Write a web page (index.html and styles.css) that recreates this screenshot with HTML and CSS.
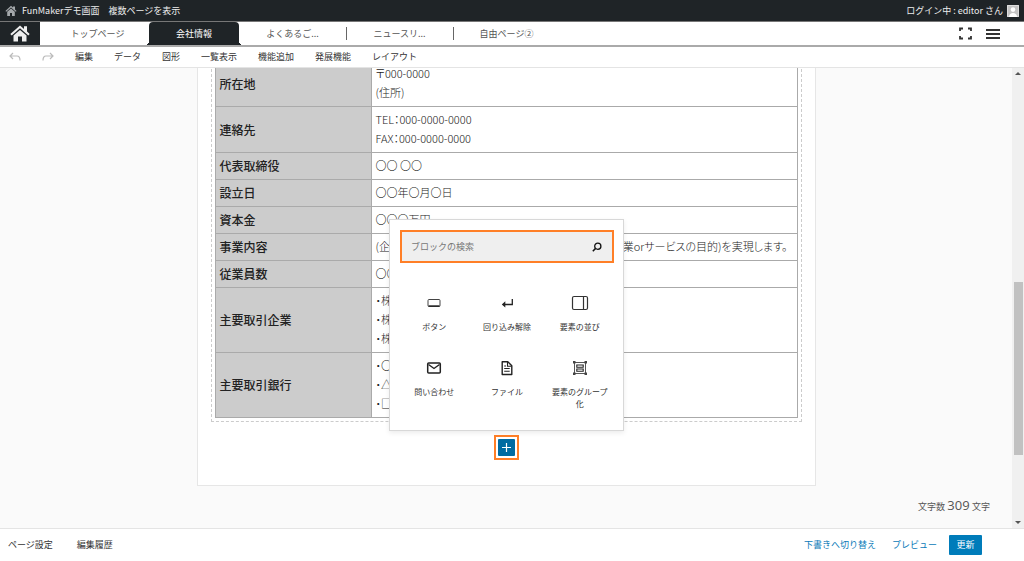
FILE: index.html
```html
<!DOCTYPE html>
<html lang="ja">
<head>
<meta charset="utf-8">
<meta name="viewport" content="width=device-width, initial-scale=1">
<title>FunMakerデモ画面</title>
<link rel="stylesheet" href="styles.css">
</head>
<body>
<header class="adminbar">
  <a class="site-link" href="#"><svg class="site-icon" viewBox="0 0 12 12"><path d="M6 .8 8 2.6V1.5h2v3L11.6 6l-.8.8L6 2.5 1.2 6.8.4 6zM2.2 6.8 6 3.5l3.8 3.3V11H7V8H5v3H2.2z" fill="#a4a8ab"/></svg>FunMakerデモ画面</a>
  <a href="#">複数ページを表示</a>
  <a class="account" href="#">ログイン中 : editor さん<svg class="avatar" viewBox="0 0 12 12"><path d="M0 0h12v12H0z" fill="#c4c4c4"/><path d="M.5.5h11v11H.5z" fill="none" stroke="#ddd"/><circle cx="6" cy="4.600" r="2.300" fill="#fff"/><path d="M2 12c0-3 2-4 4-4s4 1 4 4z" fill="#fff"/></svg></a>
</header>
<nav class="tabs" aria-label="ページ">
  <a class="home" href="#" aria-label="ホーム"><svg viewBox="0 0 20 17"><path d="M10 .5 14 4V1.300h3v5.300L19.700 9l-1.400 1.500L10 3.300l-8.300 7.200L.3 9zM3.500 10.500 10 5l6.500 5.500V16.500H12V11.500H8v5H3.500z" fill="#eee"/></svg></a>
  <a class="tab" href="#">トップページ</a>
  <a class="tab active" href="#" aria-current="page">会社情報</a>
  <a class="tab" href="#">よくあるご...</a>
  <a class="tab divided" href="#">ニュースリ...</a>
  <a class="tab divided" href="#">自由ページ②</a>
  <div class="view-tools">
    <button type="button" aria-label="全画面"><svg width="13" height="13" viewBox="0 0 13 13"><path d="M1 4V1.500h3M9 1.500h3V4M12 9v2.500H9M4 11.500H1V9" fill="none" stroke="#333" stroke-width="1.800"/></svg></button>
    <button type="button" aria-label="メニュー"><svg width="14" height="12" viewBox="0 0 14 12"><path d="M0 2h14M0 6h14M0 10h14" stroke="#333" stroke-width="2"/></svg></button>
  </div>
</nav>
<div class="toolbar">
  <button type="button" aria-label="元に戻す"><svg width="12" height="10" viewBox="0 0 12 10"><path d="M4 1 1 4l3 3M1 4h7q3 0 3 4.500" fill="none" stroke="#bbb" stroke-width="1.200"/></svg></button>
  <button type="button" aria-label="やり直す"><svg width="12" height="10" viewBox="0 0 12 10"><path d="m8 1 3 3-3 3M11 4H4Q1 4 1 8.500" fill="none" stroke="#bbb" stroke-width="1.200"/></svg></button>
  <button type="button">編集</button>
  <button type="button">データ</button>
  <button type="button">図形</button>
  <button type="button">一覧表示</button>
  <button type="button">機能追加</button>
  <button type="button">発展機能</button>
  <button type="button">レイアウト</button>
</div>
<main class="editor">
  <div class="canvas">
    <section class="paper">
      <div class="block">
        <table class="profile">
          <tr><th scope="row">所在地</th><td>〒000-0000<br>(住所)</td></tr>
          <tr><th scope="row">連絡先</th><td>TEL：000-0000-0000<br>FAX：000-0000-0000</td></tr>
          <tr><th scope="row">代表取締役</th><td>〇〇 〇〇</td></tr>
          <tr><th scope="row">設立日</th><td>〇〇年〇月〇日</td></tr>
          <tr><th scope="row">資本金</th><td>〇〇〇万円</td></tr>
          <tr><th scope="row">事業内容</th><td>(企業orサービス)を通じてお客様と社会に貢献し、(企業orサービスの目的)を実現します。</td></tr>
          <tr><th scope="row">従業員数</th><td>〇〇名</td></tr>
          <tr><th scope="row">主要取引企業</th><td>・株式会社〇〇<br>・株式会社〇〇<br>・株式会社〇〇</td></tr>
          <tr><th scope="row">主要取引銀行</th><td>・〇〇銀行<br>・△△銀行<br>・□□銀行</td></tr>
        </table>
      </div>
      <div class="adder">
        <button class="add" type="button" aria-label="ブロックを追加"><svg width="17" height="17" viewBox="0 0 17 17"><path d="M8.500 4v9M4 8.500h9" stroke="#fff" stroke-width="1.200"/></svg></button>
        <div class="inserter">
          <div class="search">
            <input type="search" aria-label="ブロックの検索" placeholder="ブロックの検索">
            <svg width="10" height="10" viewBox="0 0 10 10"><circle cx="5.800" cy="4.200" r="3.100" fill="none" stroke="#111" stroke-width="1.300"/><path d="M3.600 6.400.8 9.200" stroke="#111" stroke-width="1.500"/></svg>
          </div>
          <div class="choices">
            <button type="button"><svg viewBox="0 0 18 18"><rect x="3" y="5.500" width="12" height="7" rx="1" fill="none" stroke="#444"/><path d="M3.500 12h11" stroke="#222" stroke-width="1.400"/></svg>ボタン</button>
            <button type="button"><svg viewBox="0 0 18 18"><path d="M14.300 5v5.500H5" fill="none" stroke="#222" stroke-width="1.300"/><path d="M7.300 7.300v6.200L3.800 10.400z" fill="#222"/></svg>回り込み解除</button>
            <button type="button"><svg viewBox="0 0 18 18"><rect x="1.500" y="2.500" width="15" height="13" rx="1.500" fill="none" stroke="#333" stroke-width="1.200"/><path d="M12.500 3v12" stroke="#333" stroke-width="1.200"/></svg>要素の並び</button>
            <button type="button"><svg viewBox="0 0 18 18"><rect x="2.700" y="4" width="12.600" height="10" rx="1" fill="none" stroke="#222" stroke-width="1.500"/><path d="m3.500 5.500 5.500 4 5.500-4" fill="none" stroke="#222" stroke-width="1.400"/></svg>問い合わせ</button>
            <button type="button"><svg viewBox="0 0 18 18"><path d="M4.200 2.800h5.600l4 4v8.700H4.200z" fill="none" stroke="#222" stroke-width="1.400" stroke-linejoin="round"/><path d="M9.500 3v4.200h4M6.200 9.500h5.500M6.200 12.200h5.500M6.200 7H8" fill="none" stroke="#222" stroke-width="1.100"/></svg>ファイル</button>
            <button type="button"><svg viewBox="0 0 18 18"><rect x="3.500" y="3.500" width="11" height="11" fill="none" stroke="#555"/><path d="M2 2h2.500v2.500H2zM13.500 2H16v2.500h-2.500zM2 13.500h2.500V16H2zM13.500 13.500H16V16h-2.500z" fill="#444"/><path d="M5.800 6h6.400v2.200H5.800zM5.800 10h6.400v2.200H5.800z" fill="none" stroke="#222" stroke-width="1.100"/></svg>要素のグループ化</button>
          </div>
        </div>
      </div>
    </section>
    <p class="count">文字数 <span class="number">309</span> 文字</p>
  </div>
  <div class="scrollbar" aria-hidden="true"><span class="up"></span><span class="thumb"></span><span class="down"></span></div>
</main>
<footer class="actions">
  <button type="button">ページ設定</button>
  <button type="button">編集履歴</button>
  <a class="draft" href="#">下書きへ切り替え</a>
  <a href="#">プレビュー</a>
  <button class="update" type="button">更新</button>
</footer>
</body>
</html>
```
FILE: styles.css
```css
* { box-sizing: border-box; }
body {
  margin: 0;
  min-height: 100vh;
  display: flex;
  flex-direction: column;
  background: #fff;
  color: #333;
  font: 9px/12px "Noto Sans CJK JP", sans-serif;
}
a { color: inherit; text-decoration: none; }
button { margin: 0; padding: 0; border: 0; background: none; color: inherit; font: inherit; }
svg { display: block; flex: none; }

.adminbar {
  display: flex;
  align-items: center;
  gap: 9px;
  height: 22px;
  padding: 0 5px;
  background: #1f2427;
  border-bottom: 1px solid #777;
  color: #eee;
}
.adminbar a { display: flex; align-items: center; }
.site-link { gap: 5px; }
.site-icon { width: 12px; height: 12px; }
.adminbar .account { margin-left: auto; gap: 4px; }
.avatar { width: 12px; height: 12px; }

.tabs {
  display: flex;
  height: 25px;
  border-bottom: 2px solid #aaa;
}
.home {
  display: flex;
  align-items: center;
  justify-content: center;
  width: 40px;
  background: #1f2427;
}
.home svg { width: 20px; height: 17px; }
.tab {
  position: relative;
  display: flex;
  align-items: center;
  justify-content: center;
  width: 107px;
  color: #555;
}
.home + .tab { padding-left: 6px; width: 109px; }
.tab.divided::before {
  content: "";
  position: absolute;
  left: 0;
  top: 5px;
  bottom: 5px;
  border-left: 1px solid #666;
}
.tab.active { width: 90px; background: #1f2427; color: #fff; border-radius: 4px 4px 0 0; }
.tab.active::before,
.tab.active::after {
  content: "";
  position: absolute;
  bottom: 0;
  width: 4px;
  height: 4px;
}
.tab.active::before { right: 100%; background: radial-gradient(circle at 0 0, transparent 4px, #1f2427 4px); }
.tab.active::after { left: 100%; background: radial-gradient(circle at 100% 0, transparent 4px, #1f2427 4px); }
.view-tools { display: flex; align-items: center; gap: 14px; margin-left: auto; padding-right: 24px; }

.toolbar {
  display: flex;
  align-items: center;
  gap: 21px;
  height: 20px;
  padding: 0 9px;
}

.editor {
  display: flex;
  flex: 1;
  background: #fafafa;
  border: solid #e4e4e4;
  border-width: 1px 0;
  overflow: hidden;
}
.canvas { flex: 1; }
.paper {
  max-width: 619px;
  margin: 0 auto;
  padding: 0 13px 25px;
  background: #fff;
  border: 1px solid #e6e6e6;
  border-top: 0;
}
.block {
  margin-top: -9px;
  padding: 0 3px 3px;
  border: 1px dashed #ccc;
}
.profile {
  width: 100%;
  border-collapse: collapse;
  color: #222;
}
.profile th,
.profile td {
  border: 1px solid #aaa;
  padding: 3px 4px 4px;
  line-height: 19px;
  text-align: left;
}
.profile th { width: 156px; background: #ccc; font-size: 12px; font-weight: 500; }
.profile td { font-size: 11px; font-weight: 300; font-feature-settings: "palt"; white-space: nowrap; }

.adder { position: relative; width: 25px; margin: 13px auto 0; }
.add { display: block; padding: 2px; border: 2px solid #ff7f27; background: #fff; }
.add svg { background: #006ba1; border-radius: 1px; }
.inserter {
  position: absolute;
  bottom: 100%;
  left: 50%;
  width: 235px;
  margin: 0 0 4px -117px;
  padding: 10px 9px 20px 10px;
  background: #fff;
  border: 1px solid #d8d8d8;
  box-shadow: 0 2px 5px rgba(0, 0, 0, .08);
}
.search {
  display: flex;
  align-items: center;
  height: 33px;
  padding: 0 10px 0 9px;
  border: 2px solid #ff7f27;
  background: #efefef;
}
.search input { flex: 1; min-width: 0; padding: 0; border: 0; outline: 0; background: none; font: inherit; }
.search input::placeholder { color: #777; opacity: 1; }
.choices {
  display: grid;
  grid-template-columns: repeat(3, 1fr);
  gap: 9px 12px;
  padding: 25px 4px 0;
  font-size: 8px;
}
.choices button { display: flex; flex-direction: column; align-items: center; gap: 9px; min-height: 56px; padding: 6px 0 0; }
.choices svg { width: 18px; height: 18px; }

.count { margin: 0; padding: 10px 22px 12px 0; text-align: right; font: 9px/18px "Open Sans", "Noto Sans CJK JP", sans-serif; color: #555; }
.number { font-size: 13px; }

.scrollbar {
  display: flex;
  flex-direction: column;
  align-items: center;
  width: 12px;
  padding: 4px 0;
  background: #f0f0f0;
}
.up, .down { border: solid transparent; border-width: 3px; }
.up { border-top: 0; border-bottom-color: #555; }
.down { border-bottom: 0; border-top-color: #555; }
.thumb { width: 9px; height: 173px; margin: auto 0 66px; background: #c1c1c1; }

.actions { display: flex; align-items: center; gap: 24px; height: 32px; padding: 0 42px 0 8px; }
.actions a { color: #0a7ab8; }
.draft { margin-left: auto; }
.draft + a { margin-right: -12px; margin-left: -8px; }
.update { width: 33px; height: 20px; background: #007cba; color: #fff; border-radius: 1px; }
```
